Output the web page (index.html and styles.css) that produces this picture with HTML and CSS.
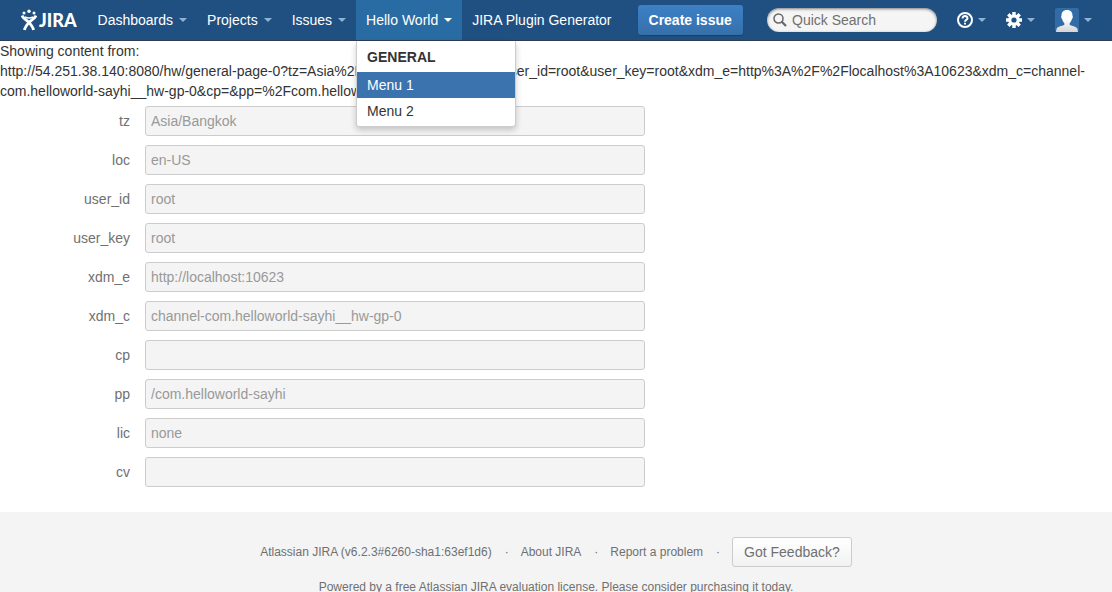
FILE: index.html
```html
<!DOCTYPE html>
<html lang="en">
<head>
    <meta charset="UTF-8">
    <meta name="viewport" content="width=device-width, initial-scale=1.0">
    <title>Hello World - JIRA</title>
    <link rel="stylesheet" href="styles.css">
</head>
<body>
    <header class="header">
        <a class="logo" href="#">
            <svg class="logo-mark" width="16" height="22" viewBox="0 0 16 22">
                <g fill="#fff">
                    <circle cx="3" cy="4" r="1.5"/>
                    <circle cx="8" cy="2.2" r="1.7"/>
                    <circle cx="13" cy="4" r="1.5"/>
                </g>
                <path d="M1 6.500 C2.200 9.300 4.500 10 7 12.500 C9.500 15 12 17.500 12.500 21" fill="none" stroke="#fff" stroke-width="2.800"/>
                <path d="M15 6.500 C13.800 9.300 11.500 10 9 12.500 C6.500 15 4 17.500 3.500 21" fill="none" stroke="#fff" stroke-width="2.800"/>
                <path d="M4 7.800 Q8 10 12 7.800" fill="none" stroke="#fff" stroke-width="1.500"/>
            </svg>
            <span>JIRA</span>
        </a>
        <nav class="nav">
            <a class="nav-item" href="#">Dashboards<span class="caret"></span></a>
            <a class="nav-item" href="#">Projects<span class="caret"></span></a>
            <a class="nav-item" href="#">Issues<span class="caret"></span></a>
            <div class="dropdown">
                <a class="nav-item active" href="#">Hello World<span class="caret"></span></a>
                <div class="menu">
                    <strong class="menu-heading">GENERAL</strong>
                    <a class="menu-item selected" href="#">Menu 1</a>
                    <a class="menu-item" href="#">Menu 2</a>
                </div>
            </div>
            <a class="nav-item" href="#">JIRA Plugin Generator</a>
            <button class="create" type="button">Create issue</button>
        </nav>
        <div class="tools">
            <form class="search">
                <svg class="search-icon" width="14" height="14" viewBox="0 0 14 14">
                    <circle cx="5.5" cy="5.5" r="4.5" fill="none" stroke="#666" stroke-width="1.5"/>
                    <path d="M8.800 8.800 L13 13" stroke="#666" stroke-width="2.200"/>
                </svg>
                <input class="search-input" type="text" placeholder="Quick Search" aria-label="Quick Search">
            </form>
            <a class="nav-item" href="#" aria-label="Help">
                <svg width="16" height="16" viewBox="0 0 16 16" fill="none" stroke="#fff" stroke-width="2">
                    <circle cx="8" cy="8" r="7"/>
                    <path d="M5.600 6.500 C5.600 3.300 10.500 3.300 10.500 6.300 C10.500 8 8 7.800 8 9.800 M8 10.800 V12.600"/>
                </svg>
                <span class="caret"></span>
            </a>
            <a class="nav-item" href="#" aria-label="Administration">
                <svg width="16" height="16" viewBox="0 0 16 16" fill="none" stroke="#fff">
                    <circle cx="8" cy="8" r="4.200" stroke-width="3.200"/>
                    <path d="M8 0 V3 M8 13 V16 M0 8 H3 M13 8 H16 M2.300 2.300 L4.500 4.500 M11.500 11.500 L13.700 13.700 M13.700 2.300 L11.500 4.500 M4.500 11.500 L2.300 13.700" stroke-width="3.400"/>
                </svg>
                <span class="caret"></span>
            </a>
            <a class="nav-item" href="#" aria-label="User profile">
                <svg width="24" height="24" viewBox="0 0 24 24">
                    <defs>
                        <linearGradient id="person" x1="0" y1="0" x2="0" y2="1">
                            <stop offset="0.4" stop-color="#fff"/>
                            <stop offset="1" stop-color="#d5d5d5"/>
                        </linearGradient>
                    </defs>
                    <rect width="24" height="24" rx="2" fill="#316ca6"/>
                    <path d="M12 2 C8 2 6.300 4.500 6.500 8 C5.800 8.300 6.200 10.500 7 10.800 C7.400 12.800 8.300 14 9.300 15 V17 C7 18 2 18.500 1.500 21 L1 24 H23 L22.500 21 C22 18.500 17 18 14.700 17 V15 C15.700 14 16.600 12.800 17 10.800 C17.800 10.500 18.200 8.300 17.500 8 C17.700 4.500 16 2 12 2 Z" fill="url(#person)"/>
                </svg>
                <span class="caret"></span>
            </a>
        </div>
    </header>

    <main class="content">
        <p class="source">Showing content from:<br>http://54.251.38.140:8080/hw/general-page-0?tz=Asia%2FBangkok&amp;loc=en-US&amp;user_id=root&amp;user_key=root&amp;xdm_e=http%3A%2F%2Flocalhost%3A10623&amp;xdm_c=channel-com.helloworld-sayhi__hw-gp-0&amp;cp=&amp;pp=%2Fcom.helloworld-sayhi&amp;lic=none&amp;cv=</p>
        <form class="params">
            <div class="row">
                <label for="tz">tz</label>
                <input type="text" id="tz" value="Asia/Bangkok" disabled>
            </div>
            <div class="row">
                <label for="loc">loc</label>
                <input type="text" id="loc" value="en-US" disabled>
            </div>
            <div class="row">
                <label for="user_id">user_id</label>
                <input type="text" id="user_id" value="root" disabled>
            </div>
            <div class="row">
                <label for="user_key">user_key</label>
                <input type="text" id="user_key" value="root" disabled>
            </div>
            <div class="row">
                <label for="xdm_e">xdm_e</label>
                <input type="text" id="xdm_e" value="http://localhost:10623" disabled>
            </div>
            <div class="row">
                <label for="xdm_c">xdm_c</label>
                <input type="text" id="xdm_c" value="channel-com.helloworld-sayhi__hw-gp-0" disabled>
            </div>
            <div class="row">
                <label for="cp">cp</label>
                <input type="text" id="cp" disabled>
            </div>
            <div class="row">
                <label for="pp">pp</label>
                <input type="text" id="pp" value="/com.helloworld-sayhi" disabled>
            </div>
            <div class="row">
                <label for="lic">lic</label>
                <input type="text" id="lic" value="none" disabled>
            </div>
            <div class="row">
                <label for="cv">cv</label>
                <input type="text" id="cv" disabled>
            </div>
        </form>
    </main>

    <footer class="footer">
        <div class="footer-links">
            <span>Atlassian JIRA (v6.2.3#6260-sha1:63ef1d6)</span>
            <span class="dot">·</span>
            <a href="#">About JIRA</a>
            <span class="dot">·</span>
            <a href="#">Report a problem</a>
            <span class="dot">·</span>
            <button class="feedback" type="button">Got Feedback?</button>
        </div>
        <p class="license">Powered by a free Atlassian JIRA evaluation license. Please consider purchasing it today.</p>
    </footer>
</body>
</html>
```
FILE: styles.css
```css
* {
    box-sizing: border-box;
}
body {
    margin: 0;
    font-family: Arial, "Liberation Sans", sans-serif;
    font-size: 14px;
    line-height: 20px;
    color: #333;
    background: #fff;
}
a {
    color: inherit;
    text-decoration: none;
}
button, input {
    font-family: inherit;
    font-size: 14px;
}
.header {
    display: flex;
    justify-content: space-between;
    padding: 0 10px;
    background: #205081;
    border-bottom: 1px solid #2e3d54;
    color: #fff;
}
.logo {
    display: flex;
    align-items: center;
    gap: 2px;
    padding: 0 11px;
    font-family: Lato, sans-serif;
    font-size: 18px;
    font-weight: 900;
}
.nav {
    display: flex;
    align-items: center;
    margin-right: auto;
}
.nav-item {
    display: flex;
    align-items: center;
    gap: 5px;
    height: 40px;
    padding: 0 10px;
    white-space: nowrap;
}
.nav-item.active {
    background: #296ca3;
}
.caret {
    border: 4px solid transparent;
    border-top-color: #8fb3d4;
    border-bottom: 0;
}
.active .caret {
    border-top-color: #fff;
}
.dropdown {
    position: relative;
}
.menu {
    position: absolute;
    top: 41px;
    left: 0;
    width: 160px;
    padding: 3px 0 2px;
    background: #fff;
    border: 1px solid #ccc;
    border-top: 0;
    border-radius: 0 0 3px 3px;
    box-shadow: 0 3px 6px rgba(0, 0, 0, 0.2);
    color: #333;
}
.menu-heading, .menu-item {
    display: block;
    padding: 3px 10px;
}
.menu-heading {
    padding-bottom: 5px;
}
.menu-item.selected {
    background: #3b73af;
    color: #fff;
}
.create {
    height: 30px;
    margin-left: 16px;
    padding: 0 11px;
    background: linear-gradient(#3d80c6, #3670ab);
    border: 0;
    border-radius: 3px;
    box-shadow: 0 1px 1px rgba(0, 0, 0, 0.2);
    color: #fff;
    font-weight: bold;
    white-space: nowrap;
}
.tools {
    display: flex;
    align-items: center;
}
.search {
    display: flex;
    align-items: center;
    gap: 5px;
    width: 170px;
    height: 24px;
    margin-right: 10px;
    padding: 0 6px;
    background: #f5f5f5;
    border-radius: 12px;
    box-shadow: inset 0 1px 3px rgba(0, 0, 0, 0.5);
}
.search-icon {
    flex: none;
}
.search-input {
    flex: 1;
    min-width: 0;
    padding: 0;
    border: 0;
    outline: 0;
    background: none;
}
.search-input::placeholder {
    color: #707070;
}
.source {
    margin: 0;
}
.params {
    padding: 5px 0 25px;
}
.row {
    display: flex;
    align-items: center;
    gap: 15px;
    margin-bottom: 9px;
}
.row:last-child {
    margin-bottom: 0;
}
.row label {
    width: 130px;
    text-align: right;
    color: #707070;
}
.row input {
    width: 100%;
    max-width: 500px;
    height: 30px;
    padding: 0 5px;
    background: #f4f4f4;
    border: 1px solid #ccc;
    border-radius: 3px;
    color: #999;
}
.nav .nav-item {
    gap: 6px;
}
.footer {
    padding-top: 25px;
    background: #f4f4f4;
    color: #707070;
    font-size: 12px;
    text-align: center;
}
.footer-links {
    display: flex;
    align-items: center;
    justify-content: center;
    gap: 13px;
}
.dot {
    width: 3px;
}
.feedback {
    height: 30px;
    padding: 0 11px;
    background: linear-gradient(#fff, #f2f2f2);
    border: 1px solid #ccc;
    border-radius: 3px;
    color: #707070;
}
.license {
    margin: 10px 0 0;
}
```
